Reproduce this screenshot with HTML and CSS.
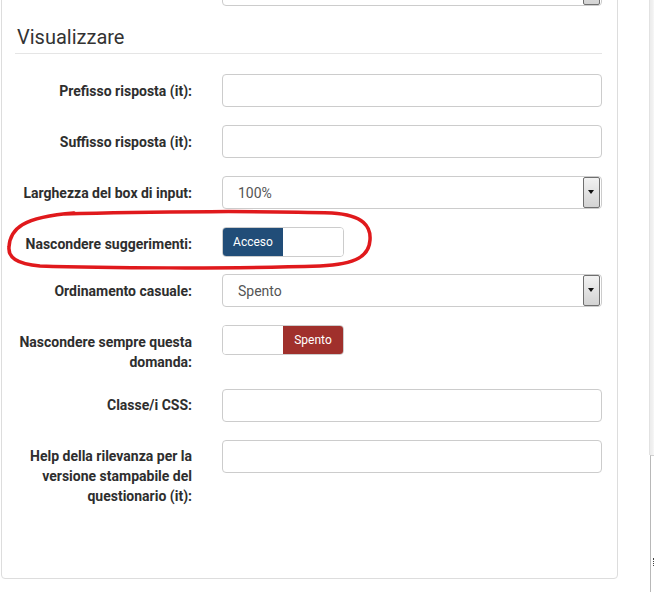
FILE: index.html
```html
<!DOCTYPE html>
<html lang="it">
<head>
<meta charset="utf-8">
<title>Visualizzare</title>
<link rel="stylesheet" href="styles.css">
</head>
<body>
<div class="page">
  <div class="panel">
    <div class="row row-top">
      <div class="label"></div>
      <div class="select"><span class="select-text"></span><span class="arrow"></span></div>
    </div>
    <h3 class="legend">Visualizzare</h3>
    <div class="row">
      <div class="label">Prefisso risposta (it):</div>
      <div class="input"></div>
    </div>
    <div class="row">
      <div class="label">Suffisso risposta (it):</div>
      <div class="input"></div>
    </div>
    <div class="row">
      <div class="label">Larghezza del box di input:</div>
      <div class="select"><span class="select-text">100%</span><span class="arrow"></span></div>
    </div>
    <div class="row row-toggle">
      <div class="label">Nascondere suggerimenti:</div>
      <div class="toggle"><span class="on">Acceso</span><span class="blank"></span></div>
    </div>
    <div class="row">
      <div class="label">Ordinamento casuale:</div>
      <div class="select"><span class="select-text">Spento</span><span class="arrow"></span></div>
    </div>
    <div class="row row-toggle">
      <div class="label">Nascondere sempre questa domanda:</div>
      <div class="toggle"><span class="blank"></span><span class="off">Spento</span></div>
    </div>
    <div class="row">
      <div class="label">Classe/i CSS:</div>
      <div class="input"></div>
    </div>
    <div class="row">
      <div class="label">Help della rilevanza per la versione stampabile del questionario (it):</div>
      <div class="input"></div>
    </div>
  </div>
  <div class="side">
    <div class="side-band"></div>
    <div class="side-box"><span class="dots"></span></div>
  </div>
  <svg class="annot" width="380" height="70" viewBox="0 0 380 70" aria-hidden="true">
    <path d="M 64 5 C 150 2, 280 2, 332 4 C 364 6, 371 18, 370 31 C 369 47, 357 55, 320 57 C 230 60, 100 59, 40 57 C 16 55, 8 48, 9 38 C 10 20, 22 8, 74 4" fill="none" stroke="#e0191c" stroke-width="3.5" stroke-linecap="round"/>
  </svg>
</div>
</body>
</html>
```

FILE: styles.css
```css
html, body {
  margin: 0;
  padding: 0;
  background: #fff;
}

body {
  font-family: Roboto, "Liberation Sans", sans-serif;
  color: #333;
  width: 654px;
  height: 592px;
  overflow: hidden;
}

.page {
  position: relative;
  display: flex;
  align-items: flex-start;
  height: 592px;
}

.panel {
  margin-left: 1px;
  width: 588px;
  height: 620px;
  margin-top: -43px;
  padding: 0 14px 0 13px;
  border: 1px solid #ddd;
  border-radius: 4px;
  flex: none;
}

.row {
  display: grid;
  grid-template-columns: 177px 380px;
  column-gap: 30px;
  margin-bottom: 18px;
  align-items: start;
}

.row-toggle {
  margin-bottom: 17px;
}

.row-top {
  margin-top: 15px;
  margin-bottom: 19px;
}

.label {
  padding-top: 6.5px;
  font-weight: 700;
  font-size: 14px;
  line-height: 20px;
  text-align: right;
  color: #2e2e2e;
}

.legend {
  margin: 0 0 20px 0;
  padding: 0 0 4px 2px;
  font-size: 20px;
  font-weight: 400;
  line-height: 24px;
  color: #333;
  border-bottom: 1px solid #e5e5e5;
  width: 585px;
}

.input,
.select {
  box-sizing: border-box;
  height: 33px;
  border: 1px solid #ccc;
  border-radius: 4px;
  background: #fff;
}

.select {
  display: flex;
  align-items: center;
  justify-content: space-between;
  padding: 0 1px 0 15px;
}

.select-text {
  font-size: 14px;
  color: #555;
}

.arrow {
  position: relative;
  box-sizing: border-box;
  width: 17px;
  height: 31px;
  border: 1px solid #6f6f6f;
  border-radius: 2px;
  background: linear-gradient(#f2f2f2, #d3d3d3);
}

.arrow::after {
  content: "";
  position: absolute;
  left: 4px;
  top: 12px;
  border-left: 3.5px solid transparent;
  border-right: 3.5px solid transparent;
  border-top: 4px solid #111;
}

.toggle {
  box-sizing: border-box;
  width: 122px;
  height: 30px;
  display: flex;
  border: 1px solid #ccc;
  border-radius: 4px;
  overflow: hidden;
}

.toggle span {
  flex: 1;
  display: flex;
  align-items: center;
  justify-content: center;
  font-size: 12px;
  color: #fff;
}

.toggle .on {
  background: #214d78;
}

.toggle .off {
  background: #a0302c;
}

.toggle .blank {
  background: #fff;
}

.side {
  margin-left: 31px;
  width: 6px;
  height: 592px;
  display: flex;
  flex-direction: column;
  flex: none;
}

.side-band {
  height: 455px;
  background: linear-gradient(90deg, #d8d8d8 0, #ececec 1px, #f2f2f2 4px, #fff 6px);
}

.side-box {
  flex: 1;
  position: relative;
  border-top: 1px solid #d0d0d0;
  border-left: 1px solid #b8b8b8;
  margin-left: 1px;
  background: #fff;
}

.dots {
  position: absolute;
  left: 2px;
  top: 102px;
  width: 1px;
  height: 8px;
  border-left: 1px dotted #444;
}

.annot {
  position: absolute;
  left: 0;
  top: 209px;
}
```
